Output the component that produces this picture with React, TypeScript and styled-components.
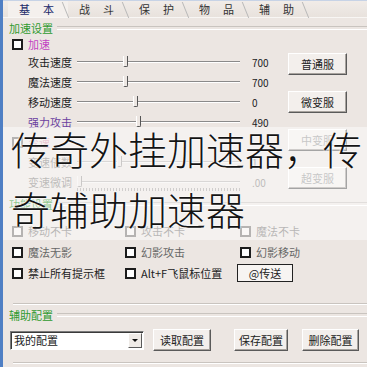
import React from "react";
import styled, { createGlobalStyle } from "styled-components";

const GlobalStyle = createGlobalStyle`
  html, body {
    margin: 0;
    padding: 0;
    background: #ece6e2;
  }
  * {
    box-sizing: border-box;
  }
`;

const ui = `"Noto Sans CJK SC", "Liberation Sans", sans-serif`;

const Window = styled.div`
  position: relative;
  width: 367px;
  height: 367px;
  overflow: hidden;
  display: flex;
  flex-direction: column;
  background: #ece6e2;
  border-left: 3px solid #4f7fc4;
  font-family: ${ui};
  font-size: 11px;
  color: #222;
`;

const TabBar = styled.div`
  display: flex;
  height: 18px;
  padding-left: 5px;
  border-top: 1px solid #c7d3e6;
  border-bottom: 1px solid #f8f6f4;
  background: linear-gradient(#f1ece8, #e8e2dd);
`;

const Tab = styled.div<{ $active?: boolean }>`
  position: relative;
  width: 60px;
  display: flex;
  align-items: center;
  justify-content: center;
  font-size: 11px;
  letter-spacing: 13px;
  padding-left: 10px;
  color: ${(p) => (p.$active ? "#1a2a6a" : "#333")};
  background: ${(p) => (p.$active ? "#f4f0ed" : "transparent")};
  &::after {
    content: "";
    position: absolute;
    right: 2px;
    top: 1px;
    width: 1px;
    height: 16px;
    background: #b8b8b8;
    transform: skewX(22deg);
  }
`;

const Group = styled.div<{ $grow?: boolean }>`
  display: flex;
  flex-direction: column;
  padding: 0 8px 0 6px;
  ${(p) => (p.$grow ? "flex: 1;" : "")}
`;

const Legend = styled.div<{ $top: number }>`
  display: flex;
  align-items: center;
  gap: 4px;
  height: 12px;
  margin-top: ${(p) => p.$top}px;
  color: #2f9a2f;
  font-size: 11px;
  &::after {
    content: "";
    flex: 1;
    height: 2px;
    border-top: 1px solid #c9c4bf;
    border-bottom: 1px solid #ffffff;
    margin-right: -8px;
  }
`;

const GroupEnd = styled.div`
  height: 2px;
  border-top: 1px solid #c9c4bf;
  border-bottom: 1px solid #ffffff;
  margin: 0 -8px 0 4px;
`;

const CheckRow = styled.label<{ $color?: string; $dim?: boolean }>`
  display: flex;
  align-items: center;
  gap: 5px;
  height: 20px;
  color: ${(p) => p.$color || "#222"};
  opacity: ${(p) => (p.$dim ? 0.55 : 1)};
  font-size: 11px;
  white-space: nowrap;
`;

const Box = styled.span`
  display: inline-block;
  width: 11px;
  height: 11px;
  border: 2px solid #1c1c1c;
  background: #fff;
  flex: none;
  margin-left: 3px;
`;

const Body = styled.div`
  display: flex;
`;

const Rows = styled.div`
  width: 279px;
  display: flex;
  flex-direction: column;
`;

const SliderRow = styled.div<{ $dim?: boolean }>`
  display: flex;
  align-items: center;
  height: 20px;
  opacity: ${(p) => (p.$dim ? 0.5 : 1)};
`;

const SliderLabel = styled.span<{ $color?: string; $indent?: number }>`
  width: ${(p) => 68 - (p.$indent ?? 0)}px;
  padding-left: ${(p) => 19 - (p.$indent ?? 0)}px;
  color: ${(p) => p.$color || "#222"};
  font-size: 11px;
  white-space: nowrap;
`;

const Track = styled.div<{ $ticks?: boolean }>`
  position: relative;
  width: 163px;
  height: 2px;
  border-top: 1px solid #8a8a8a;
  border-bottom: 1px solid #ffffff;
  ${(p) =>
    p.$ticks
      ? `&::after {
    content: "";
    position: absolute;
    left: 0;
    right: 0;
    top: 6px;
    height: 3px;
    background: repeating-linear-gradient(90deg, #6a6a6a 0 1px, transparent 1px 3px);
  }`
      : ""}
`;

const Thumb = styled.span`
  position: absolute;
  top: -6px;
  width: 5px;
  height: 11px;
  background: #ece6e2;
  border-left: 1px solid #fff;
  border-right: 1px solid #555;
  border-bottom: 1px solid #555;
  border-radius: 0 0 2px 2px;
`;

const Value = styled.span`
  margin-left: 12px;
  font-size: 10px;
  color: #222;
`;

const Buttons = styled.div`
  display: flex;
  flex-direction: column;
  gap: 16px;
  padding-top: 1px;
`;

const Btn = styled.button<{ $w?: number; $dim?: boolean }>`
  width: ${(p) => p.$w ?? 59}px;
  height: 22px;
  padding: 0;
  font-family: ${ui};
  font-size: 11px;
  color: ${(p) => (p.$dim ? "#9a9a9a" : "#222")};
  background: #f3efec;
  border: 1px solid;
  border-color: #ffffff #5a5a5a #5a5a5a #ffffff;
  box-shadow: inset -1px -1px 0 #a8a39e;
`;

const FocusBtn = styled.button`
  width: 56px;
  height: 18px;
  padding: 0;
  font-family: ${ui};
  font-size: 11px;
  color: #222;
  background: #f7f4f2;
  border: 1px solid #222;
`;

const CheckGrid = styled.div`
  display: grid;
  grid-template-columns: 113px 115px 1fr;
  margin-top: 11px;
  row-gap: 1px;
`;

const ConfigRow = styled.div`
  display: flex;
  align-items: center;
  margin-top: 8px;
  padding-left: 1px;
`;

const Combo = styled.div`
  width: 134px;
  height: 19px;
  display: flex;
  align-items: center;
  justify-content: space-between;
  background: #fff;
  border: 1px solid;
  border-color: #7a7a7a #fff #fff #7a7a7a;
  box-shadow: inset 1px 1px 0 #3a3a3a;
  padding: 0 1px 0 3px;
  font-size: 11px;
`;

const Arrow = styled.span`
  width: 14px;
  height: 15px;
  display: flex;
  align-items: center;
  justify-content: center;
  background: #efebe7;
  border: 1px solid;
  border-color: #fff #5a5a5a #5a5a5a #fff;
  &::before {
    content: "";
    border-left: 3px solid transparent;
    border-right: 3px solid transparent;
    border-top: 3px solid #111;
  }
`;

const Spacer = styled.div<{ $w: number }>`
  width: ${(p) => p.$w}px;
  flex: none;
`;

const Wash = styled.div`
  position: absolute;
  left: 0;
  right: 0;
  top: 127px;
  height: 113px;
  background: rgba(255, 255, 255, 0.45);
  pointer-events: none;
`;

const Caption = styled.div`
  position: absolute;
  left: 8px;
  top: 118px;
  width: 356px;
  font-family: "Noto Sans CJK SC", sans-serif;
  font-weight: 300;
  font-size: 39px;
  line-height: 60px;
  color: #141414;
  text-shadow: 0 0 2px #fff, 0 0 2px #fff;
`;

type Slider = {
  label: string;
  value: string;
  pos: number;
  color?: string;
  dim?: boolean;
  ticks?: boolean;
};

const sliders: Slider[] = [
  { label: "攻击速度", value: "700", pos: 46 },
  { label: "魔法速度", value: "700", pos: 46 },
  { label: "移动速度", value: "0", pos: 56 },
  { label: "强力攻击", value: "490", pos: 59, color: "#6b3fa0" },
];

const checks: { label: string; dim?: boolean; color?: string }[] = [
  { label: "移动不卡", dim: true },
  { label: "攻击不卡", dim: true },
  { label: "魔法不卡", dim: true },
  { label: "魔法无影", color: "#666" },
  { label: "幻影攻击", color: "#666" },
  { label: "幻影移动", color: "#666" },
  { label: "禁止所有提示框" },
  { label: "Alt+F飞鼠标位置" },
];

const SliderLine = ({ s }: { s: Slider }) => (
  <SliderRow $dim={s.dim}>
    <SliderLabel $color={s.color}>{s.label}</SliderLabel>
    <Track $ticks={s.ticks}>
      <Thumb style={{ left: s.pos }} />
    </Track>
    <Value>{s.value}</Value>
  </SliderRow>
);

export default function App() {
  return (
    <Window>
      <GlobalStyle />
      <TabBar>
        <Tab $active>基本</Tab>
        <Tab>战斗</Tab>
        <Tab>保护</Tab>
        <Tab>物品</Tab>
        <Tab>辅助</Tab>
      </TabBar>

      <Group>
        <Legend $top={4}>加速设置</Legend>
        <CheckRow $color="#c23fc2" style={{ height: 16, marginTop: 2 }}>
          <Box />
          加速
        </CheckRow>
        <Body>
          <Rows>
            {sliders.map((s) => (
              <SliderLine key={s.label} s={s} />
            ))}
            <CheckRow $color="#d0608a" $dim>
              <Box />
              变速
            </CheckRow>
            <SliderLine s={{ label: "变速倍数", value: "1", pos: 40, dim: true }} />
            <SliderLine s={{ label: "变速微调", value: ".00", pos: 0, dim: true, ticks: true }} />
          </Rows>
          <Buttons>
            <Btn>普通服</Btn>
            <Btn>微变服</Btn>
            <Btn $dim>中变服</Btn>
            <Btn $dim>超变服</Btn>
          </Buttons>
        </Body>

        <Legend $top={6}>功能设置</Legend>
        <CheckGrid>
          {checks.map((c) => (
            <CheckRow key={c.label} $dim={c.dim} $color={c.color}>
              <Box />
              {c.label}
            </CheckRow>
          ))}
          <CheckRow>
            <FocusBtn>@传送</FocusBtn>
          </CheckRow>
        </CheckGrid>
      </Group>

      <Group $grow>
        <div style={{ flex: 1 }} />
        <GroupEnd />
        <Legend $top={4}>辅助配置</Legend>
        <ConfigRow>
          <Combo>
            我的配置
            <Arrow />
          </Combo>
          <Spacer $w={9} />
          <Btn $w={58}>读取配置</Btn>
          <Spacer $w={23} />
          <Btn $w={54}>保存配置</Btn>
          <Spacer $w={14} />
          <Btn $w={57}>删除配置</Btn>
        </ConfigRow>
        <div style={{ height: 11 }} />
        <GroupEnd />
        <div style={{ height: 3 }} />
      </Group>

      <Wash />
      <Caption>传奇外挂加速器，传奇辅助加速器</Caption>
    </Window>
  );
}
